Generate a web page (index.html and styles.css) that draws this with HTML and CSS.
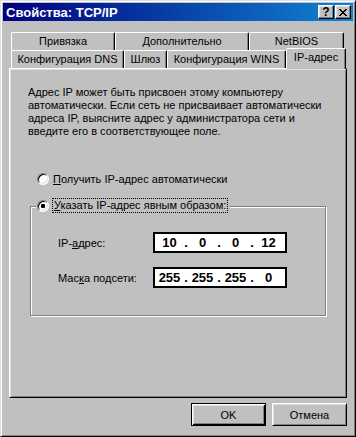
FILE: index.html
```html
<html>

<head>
    <title>Свойства: TCP/IP</title>
    <link rel="stylesheet" href="styles.css">
</head>

<body>

    <div class="window">
        <div class="titlebar">
            <span class="title">Свойства: TCP/IP</span>
            <div class="title-buttons">
                <span class="tbtn help">?</span>
                <span class="tbtn">
                    <svg width="8" height="7" viewBox="0 0 8 7">
                        <path fill="#000" d="M0 0h2v1h-2z M6 0h2v1h-2z M1 1h2v1h-2z M5 1h2v1h-2z M2 2h4v1h-4z M3 3h2v1h-2z M2 4h4v1h-4z M1 5h2v1h-2z M5 5h2v1h-2z M0 6h2v1h-2z M6 6h2v1h-2z"/>
                    </svg>
                </span>
            </div>
        </div>

        <div class="tabs">
            <div class="tab-row">
                <div class="tab tab-bind">Привязка</div>
                <div class="tab tab-extra">Дополнительно</div>
                <div class="tab tab-netbios">NetBIOS</div>
            </div>
            <div class="tab-row">
                <div class="tab tab-dns">Конфигурация DNS</div>
                <div class="tab tab-gw">Шлюз</div>
                <div class="tab tab-wins">Конфигурация WINS</div>
                <div class="tab tab-ip active">IP-адрес</div>
            </div>
        </div>

        <div class="panel">
            <p class="info">
                Адрес IP может быть присвоен этому компьютеру<br>
                автоматически. Если сеть не присваивает автоматически<br>
                адреса IP, выясните адрес у администратора сети и<br>
                введите его в соответствующее поле.
            </p>

            <div class="radio">
                <span class="radio-dot"></span>
                <span><u>П</u>олучить IP-адрес автоматически</span>
            </div>

            <div class="group">
                <div class="legend">
                    <span class="radio-dot checked"></span>
                    <span class="focus"><u>У</u>казать IP-адрес явным образом:</span>
                </div>

                <div class="field">
                    <span class="field-label">IP-<u>а</u>дрес:</span>
                    <div class="ip">
                        <span class="octet">10</span><span class="dot">.</span>
                        <span class="octet">0</span><span class="dot">.</span>
                        <span class="octet">0</span><span class="dot">.</span>
                        <span class="octet">12</span>
                    </div>
                </div>

                <div class="field field-mask">
                    <span class="field-label">Мас<u>к</u>а подсети:</span>
                    <div class="ip">
                        <span class="octet">255</span><span class="dot">.</span>
                        <span class="octet">255</span><span class="dot">.</span>
                        <span class="octet">255</span><span class="dot">.</span>
                        <span class="octet">0</span>
                    </div>
                </div>
            </div>
        </div>

        <div class="buttons">
            <button class="btn default">OK</button>
            <button class="btn">Отмена</button>
        </div>
    </div>

</body>

</html>
```

FILE: styles.css
```css
* {
    box-sizing: border-box;
}

body {
    margin: 0;
    font-family: "Liberation Sans", Arial, sans-serif;
    font-size: 11px;
    color: #000;
}

.window {
    width: 356px;
    height: 437px;
    padding: 2px;
    background: #c0c0c0;
    border: 1px solid;
    border-color: #dfdfdf #000 #000 #dfdfdf;
    box-shadow: inset 1px 1px #fff, inset -1px -1px #808080;
}

/* title bar */
.titlebar {
    display: flex;
    align-items: center;
    height: 18px;
    padding: 0 2px 0 3px;
    background: linear-gradient(to right, #000080, #1084d0);
    color: #fff;
    font-size: 13px;
    font-weight: bold;
}

.title-buttons {
    display: flex;
    gap: 1px;
    margin-left: auto;
}

.tbtn {
    display: flex;
    align-items: center;
    justify-content: center;
    width: 16px;
    height: 14px;
    background: #c0c0c0;
    border: 1px solid;
    border-color: #fff #000 #000 #fff;
    box-shadow: inset -1px -1px #808080, inset 1px 1px #dfdfdf;
    color: #000;
    font-size: 11px;
    line-height: 1;
}

.tbtn.help {
    font-size: 12px;
}

/* tabs */
.tabs {
    margin: 11px 6px 0 6px;
    padding-left: 2px;
}

.tab-row {
    display: flex;
    height: 18px;
}

.tab {
    height: 18px;
    border: 1px solid;
    border-bottom: 0;
    border-color: #fff #000 transparent #fff;
    border-radius: 2px 2px 0 0;
    box-shadow: inset -1px 0 #808080;
    line-height: 16px;
    text-align: center;
    white-space: nowrap;
}

.tab-bind { width: 104px; }
.tab-extra { width: 134px; }
.tab-netbios { width: 95px; }
.tab-dns { width: 113px; }
.tab-gw { width: 43px; }
.tab-wins { width: 119px; }
.tab-ip { width: 60px; }

.tab.active {
    position: relative;
    z-index: 1;
    height: 21px;
    margin-top: -2px;
    background: #c0c0c0;
}

/* page */
.panel {
    height: 330px;
    margin: 0 6px;
    padding: 17px 0 0 18px;
    border: 1px solid;
    border-color: #fff #000 #000 #fff;
    box-shadow: inset 1px 1px #dfdfdf, inset -1px -1px #808080;
}

.info {
    margin: 0;
    line-height: 13px;
    white-space: nowrap;
}

.radio {
    display: flex;
    align-items: center;
    gap: 4px;
    height: 14px;
    margin: 34px 0 0 9px;
}

.radio-dot {
    flex: none;
    width: 12px;
    height: 12px;
    border: 1px solid;
    border-color: #808080 #fff #fff #808080;
    border-radius: 50%;
    background: #fff;
    box-shadow: inset 1px 1px #000, inset -1px -1px #dfdfdf;
}

.radio-dot.checked {
    background: radial-gradient(circle, #000 2px, #fff 2.5px);
}

.group {
    width: 296px;
    height: 110px;
    margin: 20px 0 0 2px;
    border: 1px solid #808080;
    box-shadow: inset 1px 1px #fff, 1px 1px #fff;
}

.legend {
    display: flex;
    align-items: center;
    gap: 3px;
    width: fit-content;
    height: 15px;
    margin: -9px 0 0 5px;
    padding: 0 2px 0 1px;
    background: #c0c0c0;
}

.focus {
    padding: 0 1px;
    border: 1px dotted #000;
    line-height: 13px;
    white-space: nowrap;
}

.field {
    display: flex;
    align-items: center;
    margin: 19px 0 0 27px;
}

.field-mask {
    margin-top: 14px;
}

.field-label {
    width: 95px;
}

.ip {
    display: flex;
    align-items: center;
    width: 134px;
    height: 21px;
    background: #fff;
    border: 2px solid #000;
    font-size: 13px;
    font-weight: bold;
}

.octet {
    width: 29px;
    text-align: center;
}

.dot {
    width: 4px;
    text-align: center;
}

/* dialog buttons */
.buttons {
    display: flex;
    justify-content: flex-end;
    gap: 6px;
    margin: 5px 6px 0 0;
}

.btn {
    width: 75px;
    height: 23px;
    padding: 0;
    background: #c0c0c0;
    border: 1px solid;
    border-color: #fff #000 #000 #fff;
    box-shadow: inset 1px 1px #dfdfdf, inset -1px -1px #808080;
    color: #000;
    font: inherit;
}

.btn.default {
    border-color: #000;
    box-shadow: inset 1px 1px #fff, inset -1px -1px #000, inset 2px 2px #dfdfdf, inset -2px -2px #808080;
}
```
